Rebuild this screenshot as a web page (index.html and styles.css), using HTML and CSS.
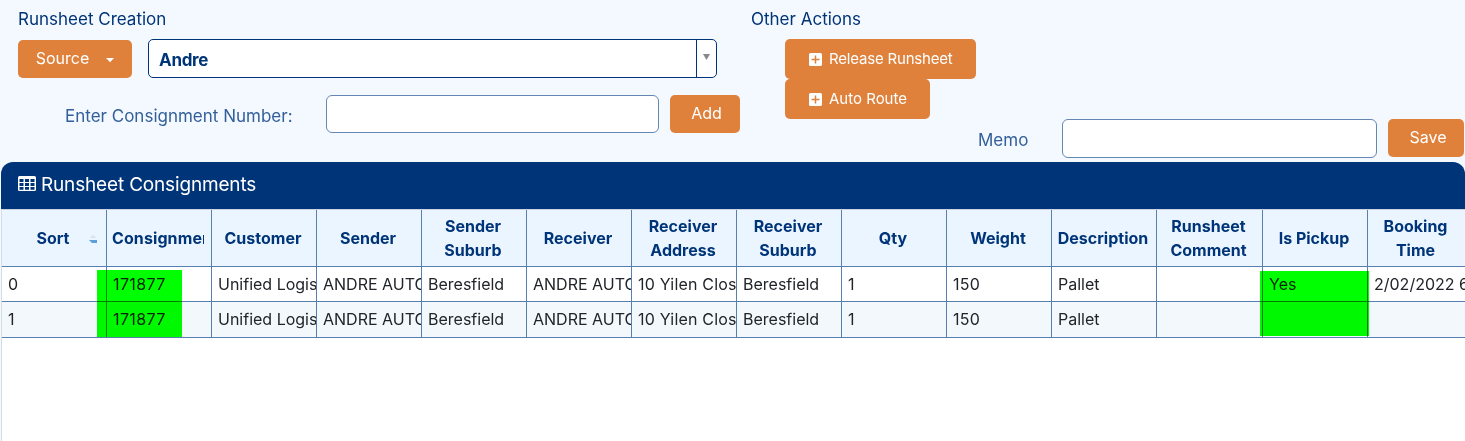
FILE: index.html
```html
<!DOCTYPE html>
<html lang="en">
<head>
<meta charset="utf-8">
<title>Runsheet</title>
<link rel="stylesheet" href="styles.css">
</head>
<body>
<div class="toolbar">
  <section class="creation">
    <h2 class="heading">Runsheet Creation</h2>
    <div class="source-row">
      <button class="btn btn-source"><span>Source</span><svg width="8" height="5" viewBox="0 0 8 5"><path d="M0 0h8L4 4.2z" fill="#fff"/></svg></button>
      <div class="select"><span class="select-value">Andre</span><span class="select-arrow"><svg width="7" height="6" viewBox="0 0 7 6"><path d="M0 0h7L3.5 6z" fill="#888"/></svg></span></div>
    </div>
    <div class="number-row">
      <label class="label" for="number">Enter Consignment Number:</label>
      <input class="input input-number" id="number" type="text">
      <button class="btn btn-add">Add</button>
    </div>
  </section>
  <section class="actions">
    <h2 class="heading">Other Actions</h2>
    <div class="action-list">
      <button class="btn btn-action btn-release"><svg width="13" height="13" viewBox="0 0 13 13"><rect width="13" height="13" rx="1.6" fill="#fff"/><path d="M6.5 2.500v8M2.500 6.500h8" stroke="#df813b" stroke-width="1.500"/></svg><span>Release Runsheet</span></button>
      <button class="btn btn-action"><svg width="13" height="13" viewBox="0 0 13 13"><rect width="13" height="13" rx="1.6" fill="#fff"/><path d="M6.5 2.500v8M2.500 6.500h8" stroke="#df813b" stroke-width="1.500"/></svg><span>Auto Route</span></button>
    </div>
    <div class="memo-row">
      <label class="label" for="memo">Memo</label>
      <input class="input input-memo" id="memo" type="text">
      <button class="btn btn-save">Save</button>
    </div>
  </section>
</div>
<main class="panel">
  <h1 class="panel-title"><svg width="18" height="15" viewBox="0 0 18 15"><rect width="18" height="15" rx="1.6" fill="#fff"/><path d="M1.500 3h4v3h-4zM7 3h4v3H7zM12.500 3h4v3h-4zM1.500 7h4v3h-4zM7 7h4v3H7zM12.500 7h4v3h-4zM1.500 11h4v2.700h-4zM7 11h4v2.700H7zM12.500 11h4v2.700h-4z" fill="#003478"/></svg><span>Runsheet Consignments</span></h1>
  <div class="grid">
    <div class="row row-head">
      <div class="th th-sort"><span>Sort</span><svg class="sort-icon" width="8" height="9" viewBox="0 0 8 9"><path d="M1 3L3 .5h2L7 3z" fill="#d5e3ee"/><path d="M0 5h8v3H3z" fill="#5b9fdb"/></svg></div>
      <div class="th th-clip"><span>Consignment</span></div>
      <div class="th"><span>Customer</span></div>
      <div class="th"><span>Sender</span></div>
      <div class="th"><span>Sender Suburb</span></div>
      <div class="th"><span>Receiver</span></div>
      <div class="th"><span>Receiver Address</span></div>
      <div class="th"><span>Receiver Suburb</span></div>
      <div class="th"><span>Qty</span></div>
      <div class="th"><span>Weight</span></div>
      <div class="th"><span>Description</span></div>
      <div class="th"><span>Runsheet Comment</span></div>
      <div class="th"><span>Is Pickup</span></div>
      <div class="th"><span>Booking Time</span></div>
    </div>
    <div class="row">
      <div class="td">0</div><div class="td td-code">171877</div><div class="td">Unified Logis</div><div class="td">ANDRE AUTO</div><div class="td">Beresfield</div><div class="td">ANDRE AUTO</div><div class="td td-address">10 Yilen Clos</div><div class="td">Beresfield</div><div class="td">1</div><div class="td td-weight">150</div><div class="td">Pallet</div><div class="td"></div><div class="td">Yes</div><div class="td">2/02/2022 6</div>
    </div>
    <div class="row row-alt">
      <div class="td">1</div><div class="td td-code">171877</div><div class="td">Unified Logis</div><div class="td">ANDRE AUTO</div><div class="td">Beresfield</div><div class="td">ANDRE AUTO</div><div class="td td-address">10 Yilen Clos</div><div class="td">Beresfield</div><div class="td">1</div><div class="td td-weight">150</div><div class="td">Pallet</div><div class="td"></div><div class="td"></div><div class="td"></div>
    </div>
    <div class="marker marker-consignment"></div>
    <div class="marker marker-pickup"></div>
  </div>
</main>
</body>
</html>
```
FILE: styles.css
```css
* { box-sizing: border-box; }
body {
  margin: 0;
  height: 441px;
  overflow: hidden;
  display: flex;
  flex-direction: column;
  background: #f4f9ff;
  font-family: Inter, "Liberation Sans", sans-serif;
  font-size: 16px;
  color: #212529;
}
svg { display: block; flex: none; }
.toolbar {
  display: grid;
  grid-template-columns: 751px 714px;
  height: 162px;
  flex: none;
}
.creation { padding: 7px 0 0 18px; }
.actions { padding-top: 7px; }
.heading {
  margin: 0;
  font-size: 17px;
  font-weight: 400;
  line-height: 24px;
  color: #003478;
}
.btn {
  display: flex;
  align-items: center;
  justify-content: center;
  height: 38px;
  padding: 0 0 2px;
  border: 0;
  border-radius: 5px;
  background: #df813b;
  color: #fff;
  font: 400 16px/24px Inter, "Liberation Sans", sans-serif;
}
.source-row { display: flex; gap: 16px; padding-top: 8px; }
.btn-source { width: 114px; margin-top: 1px; gap: 17px; }
.btn-source svg { margin-top: 4px; }
.select {
  display: flex;
  width: 569px;
  height: 39px;
  border: 1px solid #003478;
  border-radius: 5px;
  background: #fff;
  font-size: 17px;
  font-weight: 700;
  letter-spacing: -0.3px;
  color: #003478;
}
.select-value { flex: 1; padding-left: 10px; line-height: 41px; }
.select-arrow { width: 20px; padding: 14px 0 0 6px; border-left: 1px solid #003478; }
.number-row { display: flex; padding: 17px 0 0 47px; }
.label { color: #33609a; font-size: 17px; line-height: 42px; }
.number-row .label { width: 261px; }
.input {
  height: 38px;
  border: 1px solid #6487b3;
  border-radius: 6px;
  background: #fff;
  padding: 0 10px;
}
.input-number { width: 333px; }
.btn-add { width: 70px; margin-left: 11px; padding-left: 3px; }
.action-list { display: flex; flex-direction: column; align-items: flex-start; padding: 8px 0 0 34px; }
.btn-action { height: 40px; padding: 0 23px 0 24px; gap: 7px; font-size: 15px; }
.btn-release { letter-spacing: -0.19px; }
.btn-action svg { margin-top: 1px; }
.memo-row { display: flex; padding-left: 227px; }
.memo-row .label { width: 84px; }
.input-memo { width: 315px; height: 39px; }
.btn-save { width: 76px; margin-left: 11px; padding-left: 4px; }
.panel {
  flex: 1;
  display: flex;
  flex-direction: column;
  margin-left: 1px;
}
.panel-title {
  display: flex;
  align-items: center;
  gap: 5px;
  height: 47px;
  flex: none;
  margin: 0;
  padding: 0 0 3px 17px;
  border-radius: 12px 12px 0 0;
  background: #003478;
  color: #fff;
  font-size: 19px;
  font-weight: 400;
  letter-spacing: -0.17px;
}
.panel-title svg { margin-top: -1px; }
.grid {
  position: relative;
  flex: 1;
  border-top: 1px solid #c9d3df;
  border-left: 1px solid #d5dce6;
  background: #fff;
  overflow: hidden;
}
.row {
  display: grid;
  grid-template-columns: repeat(11, 105px) 106px 105px 97px;
  height: 35px;
  border-bottom: 1px solid #577faf;
}
.row-head { height: 57px; background: #eaf5ff; }
.row-alt { height: 36px; background: #f3f8fd; }
.th, .td { border-right: 1px solid #577faf; overflow: hidden; }
.th:last-child, .td:last-child { border-right: 0; }
.th {
  display: flex;
  align-items: center;
  justify-content: center;
  padding: 0 7px 0 5px;
  color: #003478;
  font-weight: 700;
  line-height: 24px;
  text-align: center;
}
.th-sort { position: relative; }
.sort-icon { position: absolute; left: 87px; top: 25px; }
.th-clip { justify-content: flex-start; letter-spacing: 0.1px; }
.th-clip span { overflow: hidden; }
.td { padding-left: 6px; line-height: 35px; white-space: nowrap; }
.td-code { letter-spacing: 0.4px; }
.td-address { letter-spacing: 0.2px; }
.td-weight { letter-spacing: 0.2px; }
.marker { position: absolute; background: #0f0; mix-blend-mode: multiply; }
.marker-consignment { left: 95px; top: 60px; width: 85px; height: 67px; }
.marker-pickup { left: 1258px; top: 61px; width: 109px; height: 65px; }
```
